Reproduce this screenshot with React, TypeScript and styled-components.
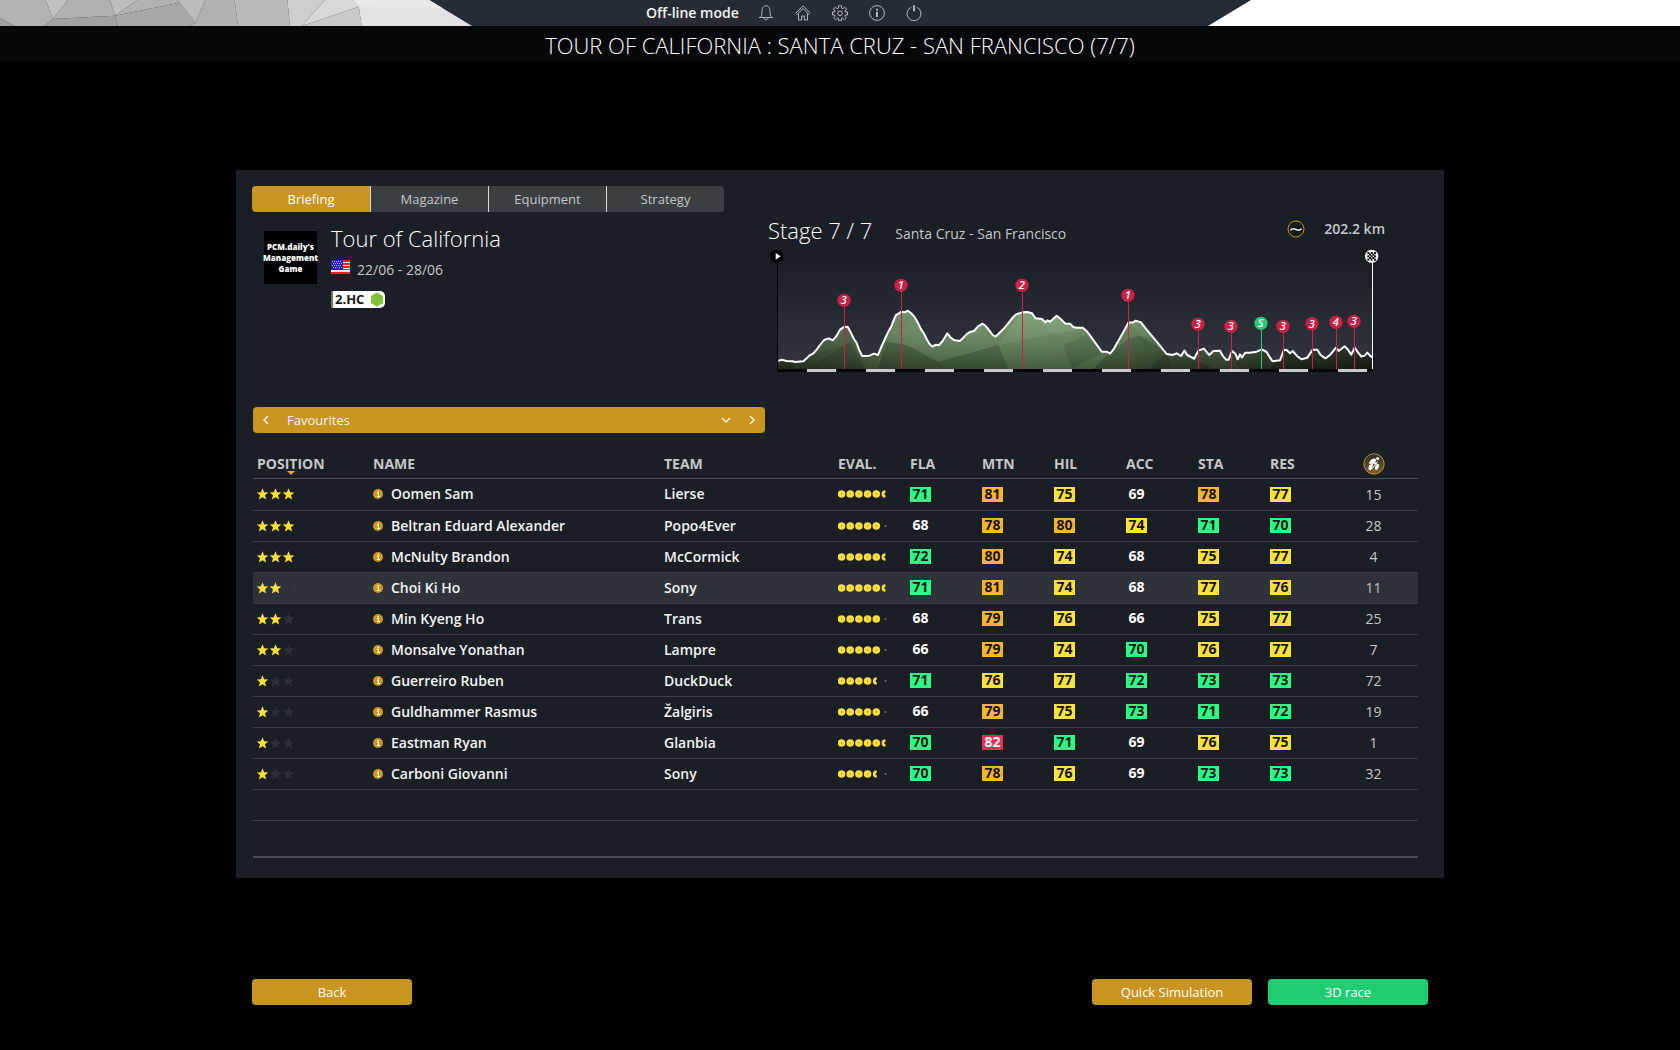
import React from "react";
import styled, { createGlobalStyle, css } from "styled-components";

const colors = {
  bar: "#262c33",
  panel: "#1a1e25",
  amber: "#ca9420",
  green: "#21cd73",
  red: "#cb2045",
  line: "#3b3f40",
  muted: "#c6c7c8",
  text: "#f4f5f5",
  star: "#ffdf3a",
};

const GlobalStyle = createGlobalStyle`
  *, *::before, *::after { box-sizing: border-box; }
  body {
    margin: 0;
    background: #000;
    color: ${colors.text};
    font-family: "Open Sans", "Noto Sans", sans-serif;
    font-size: 14px;
    line-height: 20px;
  }
  button, select {
    font: inherit;
    color: inherit;
    margin: 0;
    padding: 0;
    border: 0;
    background: none;
    cursor: pointer;
  }
`;

/* ---------- frame ---------- */

const Screen = styled.div`
  min-height: 100vh;
  display: flex;
  flex-direction: column;
`;

const TopBar = styled.header`
  display: grid;
  grid-template-columns: 472px 1fr 472px;
  height: 26px;
  background: ${colors.bar};
`;

const Shard = styled.svg`
  display: block;
  width: 100%;
  height: 26px;
`;

const Menu = styled.nav`
  display: flex;
  align-items: center;
  gap: 17px;
  padding-left: 174px;
`;

const Mode = styled.span`
  font-weight: 600;
  white-space: nowrap;
`;

const MenuButton = styled.button`
  display: grid;
  place-items: center;
  width: 20px;
  height: 20px;
  color: #b4b8bb;
`;

const TitleBar = styled.div`
  height: 35px;
  background: #060709;
  text-align: center;
`;

const Title = styled.h1`
  margin: 0;
  font-size: 22px;
  line-height: 38px;
  font-weight: 300;
  color: #fff;
`;

const Panel = styled.main`
  width: 100%;
  max-width: 1208px;
  margin: 109px auto 0;
  padding: 16px 26px 20px 17px;
  background: ${colors.panel};
`;

/* ---------- tabs ---------- */

const Tabs = styled.div`
  display: inline-flex;
  height: 26px;
  margin-left: -1px;
  border-radius: 4px;
  overflow: hidden;
  vertical-align: top;
`;

const Tab = styled.button<{ $active?: boolean }>`
  width: 118px;
  font-size: 13px;
  color: ${(p) => (p.$active ? "#fff" : colors.muted)};
  background: ${(p) => (p.$active ? colors.amber : "#3b3e43")};
  & + & {
    border-left: 1px solid #d5d6d7;
  }
`;

/* ---------- overview ---------- */

const Overview = styled.div`
  display: grid;
  grid-template-columns: 515px 1fr;
  height: 195px;
`;

const Race = styled.section`
  display: flex;
  gap: 14px;
  padding: 19px 0 0 11px;
`;

const RaceLogo = styled.div`
  display: flex;
  flex-direction: column;
  align-items: center;
  justify-content: center;
  width: 53px;
  height: 53px;
  background: #000;
  color: #fff;
  font-size: 8px;
  font-weight: 800;
  line-height: 11px;
`;

const RaceInfo = styled.div`
  display: flex;
  flex-direction: column;
  align-items: flex-start;
  margin-top: -9px;
`;

const Heading = styled.h2`
  margin: 0;
  font-size: 22px;
  line-height: 32px;
  font-weight: 300;
  color: #fff;
  white-space: nowrap;
`;

const Dates = styled.div`
  display: flex;
  gap: 7px;
  padding-top: 6px;
  color: ${colors.muted};
`;

const Category = styled.div`
  display: flex;
  align-items: center;
  justify-content: space-between;
  width: 54px;
  height: 17px;
  margin-top: 11px;
  padding: 0 1px 0 2px;
  border-left: 2px solid #77736f;
  border-radius: 0 5px 5px 0;
  background: #fdfdfb;
  color: #15171a;
  font-size: 13px;
  line-height: 17px;
  font-weight: 700;
`;

const Stage = styled.section`
  padding: 2px 31px 0 0;
`;

const StageHead = styled.div`
  display: flex;
  align-items: flex-start;
  height: 35px;
`;

const Route = styled.span`
  margin-left: 23px;
  line-height: 40px;
  color: ${colors.muted};
  white-space: nowrap;
`;

const Distance = styled.div`
  display: flex;
  align-items: center;
  gap: 19px;
  height: 30px;
  margin-left: auto;
  padding-right: 2px;
  font-weight: 600;
  color: ${colors.muted};
`;

const Chart = styled.svg`
  display: block;
  width: 609px;
  height: 124px;
  margin-left: 2px;
`;

/* ---------- list selector ---------- */

const Picker = styled.div`
  display: flex;
  align-items: center;
  width: 512px;
  height: 26px;
  border-radius: 4px;
  background: ${colors.amber};
`;

const PickerArrow = styled.button`
  display: grid;
  place-items: center;
  width: 26px;
  height: 26px;
`;

const PickerSelect = styled.select`
  flex: 1;
  height: 26px;
  padding-left: 8px;
  appearance: none;
  font-size: 13px;
  outline: 0;
`;

const Chevron = styled.svg<{ $drop?: boolean }>`
  display: block;
  margin-right: ${(p) => (p.$drop ? "8px" : "0")};
  fill: none;
  stroke: #fbf3df;
  stroke-width: 1.5;
  pointer-events: none;
`;

/* ---------- riders ---------- */

const Table = styled.table`
  width: 100%;
  margin-top: 17px;
  table-layout: fixed;
  border-collapse: separate;
  border-spacing: 0;
  border-bottom: 2px solid #4a4d51;
`;

const HeadCell = styled.th<{ $center?: boolean }>`
  position: relative;
  height: 29px;
  padding: 0 0 0 4px;
  border-bottom: 1px solid #4c4f50;
  font-weight: 700;
  color: ${colors.muted};
  text-align: left;
  ${(p) =>
    p.$center &&
    css`
      padding: 0 9px 0 0;
      text-align: center;
    `}
`;

const SortMark = styled.svg`
  position: absolute;
  left: 34px;
  bottom: 3px;
`;

const Row = styled.tr<{ $selected?: boolean }>`
  background: ${(p) => (p.$selected ? "#2e3239" : "transparent")};
`;

const Cell = styled.td<{ $center?: boolean }>`
  height: 31px;
  padding: 0 0 1px 4px;
  border-bottom: 1px solid ${colors.line};
  font-weight: 600;
  white-space: nowrap;
  tr:first-child > & {
    height: 32px;
  }
  tr:last-child > & {
    height: 35px;
    border-bottom: 0;
  }
  ${(p) =>
    p.$center &&
    css`
      padding: 0 9px 0 0;
      text-align: center;
      font-weight: 400;
      color: ${colors.muted};
    `}
`;

const Rider = styled.div`
  display: flex;
  align-items: center;
  gap: 8px;
`;

const InfoButton = styled.button`
  display: grid;
  width: 10px;
  height: 10px;
`;

const Drawing = styled.svg<{ $center?: boolean }>`
  display: block;
  margin: ${(p) => (p.$center ? "0 auto" : "0")};
`;

const tones = {
  green: ["#2bff88", "#0b1612"],
  orange: ["#ffb62c", "#16130c"],
  yellow: ["#ffe23b", "#16150c"],
  red: ["#fb2a55", "#fff"],
  none: ["transparent", "#fff"],
};
type Tone = keyof typeof tones;

const Score = styled.span<{ $tone: Tone }>`
  display: block;
  width: 21px;
  height: 15px;
  font-weight: 700;
  line-height: 14px;
  text-align: center;
  background: ${(p) => tones[p.$tone][0]};
  color: ${(p) => tones[p.$tone][1]};
`;

/* ---------- footer ---------- */

const Footer = styled.footer`
  display: flex;
  gap: 16px;
  width: 100%;
  max-width: 1208px;
  margin: 101px auto 0;
  padding: 0 16px 45px;
`;

const Action = styled.button<{ $go?: boolean; $first?: boolean }>`
  width: 160px;
  height: 26px;
  margin-right: ${(p) => (p.$first ? "auto" : "0")};
  border-radius: 4px;
  font-size: 13px;
  color: #fff;
  background: ${(p) => (p.$go ? colors.green : colors.amber)};
`;

/* ---------- drawings ---------- */

const facets: [string, string][] = [
  ["0,0 128,0 148,57 125,78 42,78 0,55", "#b3b1b3"],
  ["0,55 42,78 0,78", "#a09fa1"],
  ["128,0 190,0 148,57", "#c0c0c0"],
  ["190,0 308,0 322,47 148,57", "#b1b1b1"],
  ["125,78 148,57 322,47 330,78", "#a3a1a3"],
  ["308,0 385,0 322,47", "#bdbdbd"],
  ["385,0 497,0 503,8 322,47", "#b2b2b3"],
  ["322,47 503,8 548,68 530,78 330,78", "#a9a7a9"],
  ["497,0 575,0 548,68 503,8", "#bcbcbc"],
  ["575,0 657,0 667,78 530,78 548,68", "#b1b0b2"],
  ["657,0 805,0 812,78 667,78", "#bab9bb"],
  ["805,0 910,0 845,78 812,78", "#cfcecf"],
  ["910,0 990,0 1005,20 845,78", "#dad9da"],
  ["1005,20 1013,78 845,78", "#cac8ca"],
  ["990,0 1202,0 1322,78 1013,78 1005,20", "#e4e2e5"],
  ["990,0 1202,0 1240,25 1005,20", "#e8e8e8"],
];

const line = { fill: "none", stroke: "currentColor", strokeWidth: 1 } as const;

const menuIcons = [
  {
    label: "Notifications",
    art: (
      <g {...line}>
        <path d="M1 12.500h14M2.500 12.300c1.200-1.200 1.400-2.500 1.400-5C3.900 3.300 5.300.700 8 .7s4.100 2.600 4.100 6.600c0 2.500.200 3.800 1.400 5" />
        <path d="M6 12.800c0 2.700 4 2.700 4 0" />
      </g>
    ),
  },
  {
    label: "Home",
    art: (
      <g {...line}>
        <path d="M.7 8.200 8 .8l7.300 7.400" />
        <path d="M1.800 9.800 8 3.500l6.200 6.300M3.500 8.500v6.500h3.200v-4h2.600v4h3.200V8.500" />
      </g>
    ),
  },
  {
    label: "Settings",
    art: (
      <g {...line}>
        <path d="M6.500.7h3v2.400l1.400.6 1.700-1.600 2 2L13 6l.4 1h2.100v3h-2.200l-.6 1 1.500 1.700-2 2-1.600-1.500-1.100.4v1.900h-3v-1.900l-1.100-.4-1.600 1.500-2-2L3.300 11l-.6-1H.5V7h2.100L3 6 1.400 4.100l2-2 1.700 1.600 1.400-.6z" />
        <circle cx="8" cy="8.300" r="2.300" />
      </g>
    ),
  },
  {
    label: "Information",
    art: (
      <g {...line}>
        <circle cx="8" cy="8" r="7.400" />
        <path d="M8 6.800V12M8 3.800v1.700" strokeWidth="2" />
      </g>
    ),
  },
  {
    label: "Quit",
    art: (
      <g {...line}>
        <path d="M5.300 2.200a7 7 0 1 0 5.400 0" />
        <path d="M8 .3v6" strokeWidth="2" />
      </g>
    ),
  },
];

const leftProfile =
  "85,468 95,464 110,468 128,469 135,471 160,469 170,460 178,452 190,445 200,434 210,420 222,405 237,400 248,406 258,395 270,374 280,367 293,365 302,382 312,402 320,414 328,436 337,453 358,452 372,446 384,450 392,430 402,408 413,384 425,362 432,343 438,330 446,326 454,320 464,322 474,317 485,326 495,338 504,354 512,371 522,386 530,402 538,416 547,425 558,419 566,421 578,408 592,385 602,398 614,406 630,408 640,398 652,386 662,380 672,378 684,364 698,356 708,364 716,374 728,390 737,395 748,384 762,370 774,356 788,338 798,328 817,322 832,321 846,325 857,340 876,342 886,352 892,346 900,350 920,332 932,342 946,356 960,356 970,366 980,368 998,368 1010,378 1022,394";
const rightProfile =
  "1055,440 1070,440 1080,446 1090,434 1112,395 1125,372 1135,353 1150,352 1157,347 1173,352 1185,368 1205,392 1222,412 1250,447 1268,450 1280,445 1293,453 1303,437 1312,450 1332,461 1345,437 1362,431 1370,441 1378,450 1390,438 1410,437 1418,452 1428,464 1436,464 1446,438 1456,446 1463,463 1470,448 1476,457 1486,443 1500,443 1520,440 1535,433 1550,441 1560,458 1568,469 1590,466 1602,434 1610,435 1620,445 1628,438 1640,452 1654,463 1672,458 1688,434 1702,434 1712,450 1726,460 1740,450 1758,428 1766,438 1784,424 1792,432 1804,449 1814,428 1824,442 1834,455 1844,452 1852,443 1860,452 1867,457";
const profile = `${leftProfile} ${rightProfile}`;

const climbs: [number, number, string][] = [
  [283, 286, "3"],
  [454, 241, "1"],
  [817, 241, "2"],
  [1135, 271, "1"],
  [1345, 358, "3"],
  [1444, 364, "3"],
  [1534, 355, "S"],
  [1600, 364, "3"],
  [1687, 356, "3"],
  [1759, 352, "4"],
  [1813, 349, "3"],
];

const ridges: [string, string, number][] = [
  ["170,492 300,410 345,492", "#20281f", 0.35],
  ["225,400 283,340 283,420 180,450", "#6f8b67", 0.2],
  ["384,492 410,410 470,420 565,470 600,492", "#1d2a1b", 0.4],
  ["425,372 510,360 530,430 470,420 410,410", "#8fae86", 0.14],
  ["530,430 640,400 700,350 745,420 565,470", "#7b9a72", 0.2],
  ["565,470 745,420 775,492 600,492", "#23301f", 0.35],
  ["745,420 820,310 870,330 910,386", "#9dbd95", 0.25],
  ["745,420 910,386 940,420 965,492 775,492", "#6b8a62", 0.3],
  ["850,320 990,350 1000,372 910,386", "#b3cfac", 0.25],
  ["940,420 1030,380 1060,440 965,492", "#3f5739", 0.35],
  ["1080,440 1140,400 1170,392 1250,440 1260,492 1030,492", "#253121", 0.4],
  ["1130,340 1180,350 1215,400 1170,392", "#9dbd95", 0.2],
  ["1250,440 1345,470 1390,492 1200,492", "#222b1f", 0.4],
  ["1345,420 1440,440 1470,492 1390,492", "#4f6148", 0.25],
  ["1600,430 1680,450 1720,492 1560,492", "#0e130d", 0.4],
];

const StageChart = () => (
  <Chart viewBox="60 132 1827 372" role="img" aria-label="Stage profile">
    <defs>
      <linearGradient id="haze" x1="0" y1="0" x2="0" y2="1">
        <stop offset="0" stopColor="#32363f" stopOpacity="0" />
        <stop offset="1" stopColor="#32363f" />
      </linearGradient>
      <linearGradient id="grass" x1="0" y1="0" x2="1" y2="0">
        <stop offset="0" stopColor="#263022" />
        <stop offset=".12" stopColor="#465a3f" />
        <stop offset=".22" stopColor="#67865f" />
        <stop offset=".42" stopColor="#6f9066" />
        <stop offset=".58" stopColor="#64845d" />
        <stop offset=".68" stopColor="#465a40" />
        <stop offset=".85" stopColor="#252f21" />
        <stop offset="1" stopColor="#10150e" />
      </linearGradient>
      <linearGradient id="depth" x1="0" y1="0" x2="0" y2="1">
        <stop offset="0" stopColor="#a8cc9e" stopOpacity=".2" />
        <stop offset="1" stopColor="#141d12" stopOpacity=".45" />
      </linearGradient>
      <clipPath id="land">
        <polygon points={`84,492 ${profile} 1867,492`} />
      </clipPath>
    </defs>
    <rect x="84" y="160" width="1782" height="332" fill="url(#haze)" />
    <g clipPath="url(#land)">
      <rect x="84" y="310" width="1783" height="182" fill="url(#grass)" />
      {ridges.map(([points, fill, opacity]) => (
        <polygon key={points} points={points} fill={fill} opacity={opacity} />
      ))}
      <rect x="84" y="310" width="1783" height="182" fill="url(#depth)" />
    </g>
    <polyline points={profile} fill="none" stroke="#fff" strokeWidth="6" strokeLinejoin="round" />
    <rect x="81" y="492" width="1788" height="9" fill="#050607" />
    {Array.from({ length: 10 }, (_, i) => (
      <rect key={i} x={171 + i * 177} y="492" width="87" height="9" fill="#c9cacb" />
    ))}
    {climbs.map(([x, y, rank]) => {
      const fill = rank === "S" ? colors.green : colors.red;
      return (
        <g key={x}>
          <rect x={x - 1} y={y} width="3" height={492 - y} fill={fill} />
          <circle cx={x - 1} cy={y} r="20" fill={fill} />
          <text
            x={x - 2}
            y={y + 12}
            fill="#fff"
            fontSize="33"
            fontStyle="italic"
            fontWeight="600"
            textAnchor="middle"
          >
            {rank}
          </text>
        </g>
      );
    })}
    <rect x="81" y="154" width="3" height="347" fill="#050607" />
    <circle cx="80" cy="154" r="20" fill="#050607" />
    <path d="M77 144v20l15-10z" fill="#fff" />
    <rect x="1866" y="154" width="3" height="338" fill="#fff" />
    <circle cx="1865" cy="154" r="20" fill="#f4f4f4" />
    <g fill="#16181b">
      {[-10, 0, 10].map((dx) =>
        [-10, 0, 10].map((dy) => (
          <rect key={`${dx}${dy}`} x={1862 + dx} y={151 + dy} width="6" height="6" />
        ))
      )}
      {[-5, 5].map((dx) =>
        [-5, 5].map((dy) => (
          <rect key={`${dx}${dy}`} x={1862 + dx} y={151 + dy} width="6" height="6" />
        ))
      )}
    </g>
  </Chart>
);

const Flag = () => (
  <svg width="19" height="14" viewBox="0 0 19 14" role="img" aria-label="United States">
    <rect width="19" height="14" fill="#f4201f" />
    {[3, 6, 9, 12].map((y) => (
      <rect key={y} y={y - 1} width="19" height="1" fill="#ffd9d6" />
    ))}
    <rect y="10" width="19" height="1" fill="#fff" />
    <rect width="12" height="10" fill="#2a22a8" />
    {[1, 3, 5, 7].map((y) =>
      [1, 3, 5, 7, 9].map((x) => (
        <rect key={`${x}-${y}`} x={x + (y % 4 === 3 ? 1 : 0)} y={y} width="1" height="1" fill="#a7a3ea" />
      ))
    )}
  </svg>
);

const Stars = ({ value }: { value: number }) => (
  <Drawing width="38" height="12" viewBox="0 0 38 12" role="img" aria-label={`${value} of 3 stars`}>
    {[0, 1, 2].map((i) => (
      <path
        key={i}
        transform={`translate(${i * 13} 0)`}
        d="M5.500.2 7.100 4.200l4.200.2L8 7.300l1.200 4.200-3.700-2.300-3.700 2.300L3 7.300-.3 4.400l4.200-.2z"
        fill={i < value ? colors.star : "#2b2f36"}
      />
    ))}
  </Drawing>
);

const Evaluation = ({ value }: { value: number }) => (
  <Drawing width="50" height="8" viewBox="0 0 50 8" role="img" aria-label={`Evaluation ${value}`}>
    {[0, 1, 2, 3, 4, 5].map((i) => {
      const cx = 3.5 + i * 8.7;
      if (value >= i + 1)
        return (
          <g key={i}>
            <circle cx={cx} cy="4" r="3.800" fill={colors.star} />
            <rect x={cx - 0.5} y="3" width="1" height="2" fill="#b5a136" />
          </g>
        );
      if (value > i)
        return <path key={i} d={`M${cx + 0.4} .2a3.800 3.800 0 0 0 0 7.600v-2.800h-1v-2h1z`} fill={colors.star} />;
      return <rect key={i} x={cx - 0.5} y="3" width="2" height="2" fill="#5d6053" />;
    })}
  </Drawing>
);

/* ---------- data ---------- */

type RiderRow = [number, string, string, number, string, number];

// Scores are written in column order with a tone letter: g, o, y, r, or n for plain.
const riders: RiderRow[] = [
  [3, "Oomen Sam", "Lierse", 5.5, "71g 81o 75y 69n 78o 77y", 15],
  [3, "Beltran Eduard Alexander", "Popo4Ever", 5, "68n 78o 80o 74y 71g 70g", 28],
  [3, "McNulty Brandon", "McCormick", 5.5, "72g 80o 74y 68n 75y 77y", 4],
  [2, "Choi Ki Ho", "Sony", 5.5, "71g 81o 74y 68n 77y 76y", 11],
  [2, "Min Kyeng Ho", "Trans", 5, "68n 79o 76y 66n 75y 77y", 25],
  [2, "Monsalve Yonathan", "Lampre", 5, "66n 79o 74y 70g 76y 77y", 7],
  [1, "Guerreiro Ruben", "DuckDuck", 4.5, "71g 76y 77y 72g 73g 73g", 72],
  [1, "Guldhammer Rasmus", "Žalgiris", 5, "66n 79o 75y 73g 71g 72g", 19],
  [1, "Eastman Ryan", "Glanbia", 5.5, "70g 82r 71g 69n 76y 75y", 1],
  [1, "Carboni Giovanni", "Sony", 4.5, "70g 78o 76y 69n 73g 73g", 32],
];

const toneOf: Record<string, Tone> = { g: "green", o: "orange", y: "yellow", r: "red", n: "none" };
const headings = ["NAME", "TEAM", "EVAL.", "FLA", "MTN", "HIL", "ACC", "STA", "RES"];
const tabs = ["Briefing", "Magazine", "Equipment", "Strategy"];

export default function App() {
  return (
    <Screen>
      <GlobalStyle />
      <TopBar>
        <Shard viewBox="0 0 1322 78" preserveAspectRatio="none" aria-hidden="true">
          {facets.map(([points, fill]) => (
            <polygon key={points} points={points} fill={fill} />
          ))}
        </Shard>
        <Menu>
          <Mode>Off-line mode</Mode>
          {menuIcons.map(({ label, art }) => (
            <MenuButton key={label} aria-label={label}>
              <svg width="16" height="16" viewBox="0 0 16 16">
                {art}
              </svg>
            </MenuButton>
          ))}
        </Menu>
        <Shard viewBox="0 0 472 26" preserveAspectRatio="none" aria-hidden="true">
          <polygon points="43,0 472,0 472,26 0,26" fill="#fff" />
        </Shard>
      </TopBar>
      <TitleBar>
        <Title>TOUR OF CALIFORNIA : SANTA CRUZ - SAN FRANCISCO (7/7)</Title>
      </TitleBar>

      <Panel>
        <Tabs role="tablist">
          {tabs.map((name, i) => (
            <Tab key={name} role="tab" aria-selected={i === 0} $active={i === 0}>
              {name}
            </Tab>
          ))}
        </Tabs>

        <Overview>
          <Race>
            <RaceLogo>
              <span>PCM.daily's</span>
              <span>Management</span>
              <span>Game</span>
            </RaceLogo>
            <RaceInfo>
              <Heading>Tour of California</Heading>
              <Dates>
                <Flag />
                <span>22/06 - 28/06</span>
              </Dates>
              <Category>
                2.HC
                <svg width="14" height="15" viewBox="0 0 14 15" aria-hidden="true">
                  <path d="M7 .5l6 3.500v7l-6 3.500-6-3.500V4z" fill="#84c235" />
                </svg>
              </Category>
            </RaceInfo>
          </Race>
          <Stage>
            <StageHead>
              <Heading>Stage 7 / 7</Heading>
              <Route>Santa Cruz - San Francisco</Route>
              <Distance>
                <svg width="18" height="18" viewBox="0 0 18 18" aria-hidden="true">
                  <circle cx="9" cy="9" r="8" fill="#16191c" stroke="#b3992a" />
                  <path
                    d="M3.500 10.500c1.500-2.500 3.400-2 5.500-1s3.600 1.200 5.500-.6"
                    fill="none"
                    stroke="#e8e8e8"
                    strokeWidth="1.500"
                  />
                </svg>
                202.2 km
              </Distance>
            </StageHead>
            <StageChart />
          </Stage>
        </Overview>

        <Picker>
          <PickerArrow aria-label="Previous list">
            <Chevron width="8" height="10" viewBox="0 0 8 10">
              <path d="M6 1 2 5l4 4" />
            </Chevron>
          </PickerArrow>
          <PickerSelect aria-label="Rider list" defaultValue="Favourites">
            <option>Favourites</option>
          </PickerSelect>
          <Chevron $drop width="10" height="8" viewBox="0 0 10 8">
            <path d="M1 2l4 4 4-4" />
          </Chevron>
          <PickerArrow aria-label="Next list">
            <Chevron width="8" height="10" viewBox="0 0 8 10">
              <path d="M2 1l4 4-4 4" />
            </Chevron>
          </PickerArrow>
        </Picker>

        <Table>
          <colgroup>
            <col style={{ width: 116 }} />
            <col />
            <col style={{ width: 174 }} />
            {headings.slice(2).map((h) => (
              <col key={h} style={{ width: 72 }} />
            ))}
            <col style={{ width: 80 }} />
          </colgroup>
          <thead>
            <tr>
              <HeadCell aria-sort="descending">
                POSITION
                <SortMark width="8" height="4" viewBox="0 0 8 4" aria-hidden="true">
                  <path d="M0 0h8L4 4z" fill="#f0a52c" />
                </SortMark>
              </HeadCell>
              {headings.map((h) => (
                <HeadCell key={h}>{h}</HeadCell>
              ))}
              <HeadCell $center>
                <Drawing $center width="22" height="22" viewBox="0 0 22 22" role="img" aria-label="Race days">
                  <defs>
                    <linearGradient id="badge" x1="0" y1="0" x2="0" y2="1">
                      <stop offset="0" stopColor="#2b2a2a" />
                      <stop offset="1" stopColor="#80642a" />
                    </linearGradient>
                  </defs>
                  <circle cx="11" cy="11" r="10.200" fill="url(#badge)" stroke="#c28f26" />
                  <path
                    d="M6.200 11c0-2.800 2.300-5.200 5.600-5.400l1.500 1.200-1 2.400 1.600 1.200-.8 1-2.600-1-1 2.400-1.300-.4.300-2z"
                    fill="#fff"
                  />
                  <circle cx="14.700" cy="5.500" r="1.500" fill="#fff" />
                  <ellipse cx="7.500" cy="14.300" rx="1.800" ry="3" fill="#fff" transform="rotate(20 7.500 14.300)" />
                  <ellipse cx="14" cy="13.800" rx="1.700" ry="3.200" fill="#fff" transform="rotate(20 14 13.800)" />
                  <path d="M9.500 15.500 14.500 8.500" stroke="#fff" />
                </Drawing>
              </HeadCell>
            </tr>
          </thead>
          <tbody>
            {riders.map(([stars, name, team, evaluation, scores, races], i) => (
              <Row key={name} $selected={i === 3}>
                <Cell>
                  <Stars value={stars} />
                </Cell>
                <Cell>
                  <Rider>
                    <InfoButton aria-label={`About ${name}`}>
                      <Drawing width="10" height="10" viewBox="0 0 10 10">
                        <circle cx="5" cy="5" r="5" fill="#d0961f" />
                        <path d="M4 4.500h1.500v3M4 7.500h3" stroke="#fff" fill="none" />
                        <rect x="4.500" y="2" width="1.500" height="1.500" fill="#fff" />
                      </Drawing>
                    </InfoButton>
                    {name}
                  </Rider>
                </Cell>
                <Cell>{team}</Cell>
                <Cell>
                  <Evaluation value={evaluation} />
                </Cell>
                {scores.split(" ").map((s, n) => (
                  <Cell key={n}>
                    <Score $tone={toneOf[s[2]]}>{s.slice(0, 2)}</Score>
                  </Cell>
                ))}
                <Cell $center>{races}</Cell>
              </Row>
            ))}
            <Row>
              <Cell colSpan={11} />
            </Row>
            <Row>
              <Cell colSpan={11} />
            </Row>
          </tbody>
        </Table>
      </Panel>

      <Footer>
        <Action $first>Back</Action>
        <Action>Quick Simulation</Action>
        <Action $go>3D race</Action>
      </Footer>
    </Screen>
  );
}
